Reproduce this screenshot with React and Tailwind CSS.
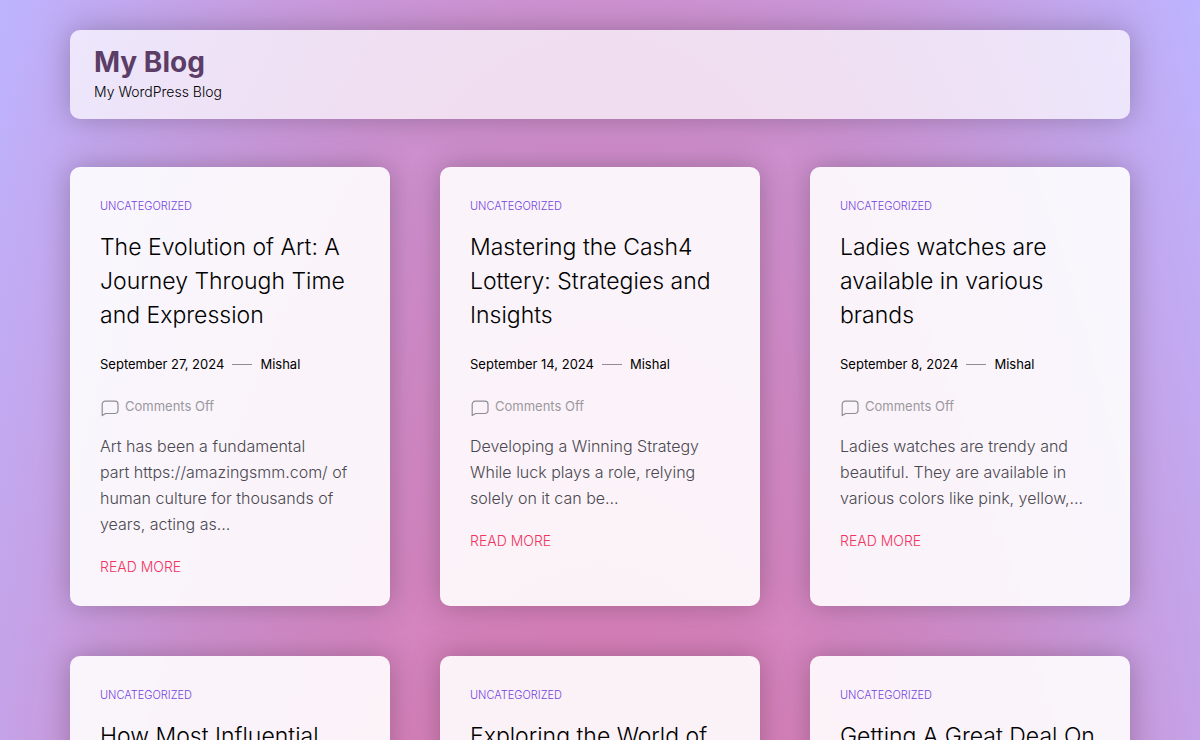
import React from "react";

const posts = [
  {
    title: "The Evolution of Art: A Journey Through Time and Expression",
    lines: ["The Evolution of Art: A", "Journey Through Time", "and Expression"],
    date: "September 27, 2024",
    excerpt: [
      "Art has been a fundamental",
      "part https://amazingsmm.com/ of",
      "human culture for thousands of",
      "years, acting as…",
    ],
  },
  {
    title: "Mastering the Cash4 Lottery: Strategies and Insights",
    lines: ["Mastering the Cash4", "Lottery: Strategies and", "Insights"],
    date: "September 14, 2024",
    excerpt: [
      "Developing a Winning Strategy",
      "While luck plays a role, relying",
      "solely on it can be…",
    ],
  },
  {
    title: "Ladies watches are available in various brands",
    lines: ["Ladies watches are", "available in various", "brands"],
    date: "September 8, 2024",
    excerpt: [
      "Ladies watches are trendy and",
      "beautiful. They are available in",
      "various colors like pink, yellow,…",
    ],
  },
  { title: "How Most Influential", lines: ["How Most Influential"] },
  { title: "Exploring the World of", lines: ["Exploring the World of"] },
  { title: "Getting A Great Deal On", lines: ["Getting A Great Deal On"] },
];

const CommentIcon = () => (
  <svg
    viewBox="0 0 20 20"
    className="w-5 h-5 mt-1 text-[#8f8c95]"
    fill="none"
    stroke="currentColor"
    strokeWidth="1.2"
    strokeLinejoin="round"
    aria-hidden="true"
  >
    <path d="M2.2 17.6V6.2a3 3 0 0 1 3-3h9.8a3 3 0 0 1 3 3v6.3a3 3 0 0 1-3 3H5.6z" />
  </svg>
);

const PostCard = ({ post }) => (
  <article className="bg-white/90 rounded-[10px] shadow-[0_0_30px_rgba(0,0,0,0.25)] px-[30px] pt-[30px] pb-6 min-h-[439px]">
    <a
      href="#uncategorized"
      className="block text-[11px] leading-[18px] text-[#7344e0] uppercase"
    >
      Uncategorized
    </a>
    <h2 className="mt-[15px] text-[23px] leading-[34px] text-black">
      <a href="#post" aria-label={post.title}>
        {post.lines.map((line) => (
          <span key={line} className="block whitespace-nowrap">
            {line}
          </span>
        ))}
      </a>
    </h2>
    {post.date && (
      <>
        <div className="mt-5 flex items-center gap-2 text-[13px] leading-6 font-normal text-black whitespace-nowrap">
          <time>{post.date}</time>
          <span className="w-5 h-px bg-[#8f8c95]" />
          <a href="#author">Mishal</a>
        </div>
        <div className="mt-[18px] flex items-center gap-[5px] text-[13px] leading-6 font-normal text-[#9b98a0]">
          <CommentIcon />
          <span>Comments Off</span>
        </div>
        <p className="mt-[15px] text-[16px] leading-[26px] text-[#4a4850]">
          {post.excerpt.map((line) => (
            <span key={line} className="block whitespace-nowrap">
              {line}
            </span>
          ))}
        </p>
        <a
          href="#read-more"
          className="mt-[18px] inline-block text-[14px] leading-6 text-[#f0335f] uppercase"
        >
          Read More
        </a>
      </>
    )}
  </article>
);

const App = () => {
  return (
    <div className="h-screen overflow-hidden bg-[radial-gradient(ellipse_849px_3140px_at_50%_2220px,#d97bb0_40%,#d67fb8_50%,#cd90cf_70%,#bdb4ff)] font-light font-[Inter,'Liberation_Sans',sans-serif]">
      <div className="max-w-[1060px] mx-auto pt-[30px]">
        <header className="h-[89px] px-6 pt-3 rounded-[10px] bg-white/70 shadow-[0_0_30px_rgba(0,0,0,0.25)]">
          <h1 className="text-[28px] leading-10 font-bold text-[#5b3d66]">
            <a href="#home">My Blog</a>
          </h1>
          <p className="text-[14px] leading-5 text-black">My WordPress Blog</p>
        </header>
        <main className="mt-12 grid grid-cols-3 gap-[50px]">
          {posts.map((post) => (
            <PostCard key={post.title} post={post} />
          ))}
        </main>
      </div>
    </div>
  );
};

export default App;
